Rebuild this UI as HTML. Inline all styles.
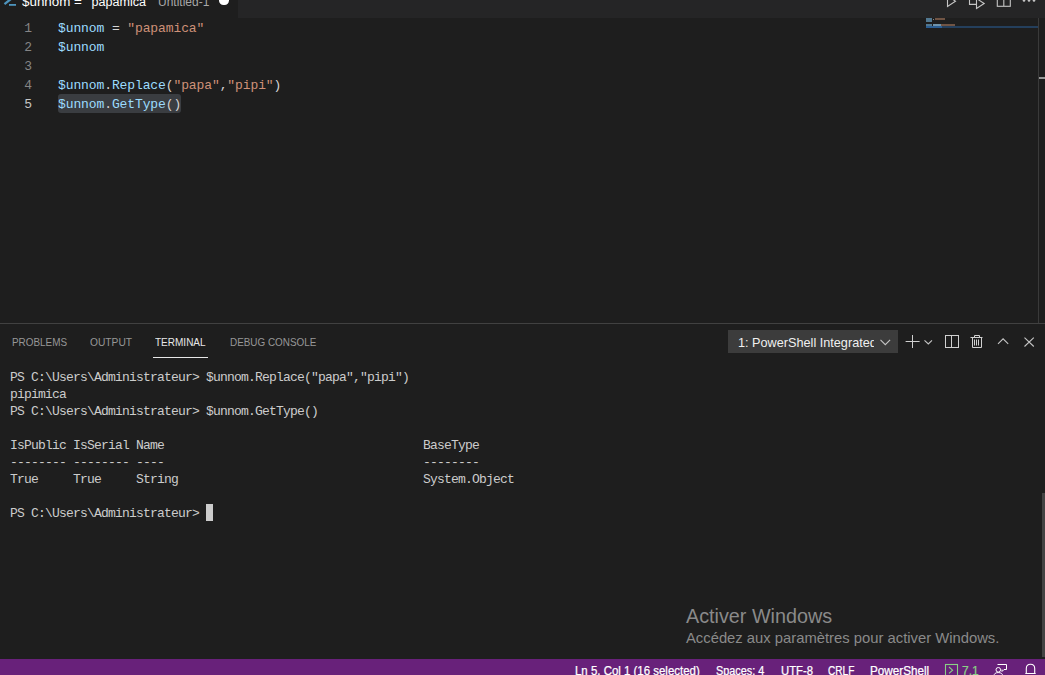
<!DOCTYPE html>
<html><head><meta charset="utf-8">
<style>
*{margin:0;padding:0;box-sizing:border-box}
html,body{width:1045px;height:675px;overflow:hidden;background:#1e1e1e;position:relative}
.abs{position:absolute}
.sans{font-family:"Liberation Sans",sans-serif}
.mono{font-family:"Liberation Mono",monospace;white-space:pre}
#tabbar{left:0;top:0;width:1045px;height:18px;background:#252526}
#tab{left:0;top:0;width:238px;height:18px;background:#1e1e1e;overflow:hidden}
.ln{font-family:"Liberation Mono",monospace;font-size:13px;color:#858585;width:32px;text-align:right;left:0;height:19px;line-height:19px}
.code{font-family:"Liberation Mono",monospace;font-size:13px;letter-spacing:-0.105px;color:#d4d4d4;left:58px;height:19px;line-height:19px;white-space:pre}
.v{color:#9cdcfe}.s{color:#ce9178}
.term{font-family:"Liberation Mono",monospace;font-size:13px;letter-spacing:-0.8px;color:#cccccc;left:10px;height:17px;line-height:17px;white-space:pre}
.ptab{font-family:"Liberation Sans",sans-serif;font-size:11px;color:#979797;top:336px;line-height:13px;transform-origin:0 0;white-space:pre}
.sb{font-family:"Liberation Sans",sans-serif;font-size:12px;color:#fff;-webkit-text-stroke:0.25px currentColor;top:663px;line-height:16px;transform-origin:0 0;white-space:pre}
</style></head>
<body>
<!-- tab bar -->
<div id="tabbar" class="abs"></div>
<div id="tab" class="abs">
  <svg class="abs" style="left:0;top:0" width="20" height="18" viewBox="0 0 20 18"><path d="M4.5 4.2 L11.5 -1.5" stroke="#4d94bd" stroke-width="2.3" fill="none"/><rect x="9" y="4" width="7" height="1.8" fill="#4d94bd"/></svg>
  <div class="abs sans" style="left:22px;top:-6.5px;font-size:13px;color:#fff;line-height:16px;white-space:pre;transform:scaleX(1.03);transform-origin:0 0">$unnom =</div>
  <div class="abs sans" style="left:87px;top:-6.5px;font-size:13px;color:#fff;line-height:16px;white-space:pre;transform:scaleX(0.967);transform-origin:0 0">"papamica"</div>
  <div class="abs sans" style="left:158px;top:-6px;font-size:12px;color:#a8a8a8;line-height:16px;white-space:pre">Untitled-1</div>
  <div class="abs" style="left:219px;top:-4.2px;width:9.5px;height:9.5px;border-radius:50%;background:#fff"></div>
</div>
<!-- editor actions -->
<svg class="abs" style="left:940px;top:0" width="105" height="18" viewBox="0 0 105 18">
  <path d="M7.5 -4.5 L15.5 1.3 L7.5 6.5 Z" stroke="#c5c5c5" stroke-width="1.1" fill="none"/>
  <path d="M29.5 -3 V4.4 H36" stroke="#c5c5c5" stroke-width="1.1" fill="none"/>
  <path d="M36.5 -1.5 L44.2 3.5 L36.5 8.5 Z" stroke="#c5c5c5" stroke-width="1.1" fill="none"/>
  <rect x="57.3" y="-6" width="13" height="12.3" stroke="#c5c5c5" stroke-width="1.1" fill="none"/>
  <path d="M63.8 -6 V6" stroke="#c5c5c5" stroke-width="1.1"/>
  <circle cx="84" cy="0.5" r="1.3" fill="#c5c5c5"/><circle cx="89" cy="0.5" r="1.3" fill="#c5c5c5"/><circle cx="94" cy="0.5" r="1.3" fill="#c5c5c5"/>
</svg>

<!-- line numbers -->
<div class="abs ln" style="top:19px">1</div>
<div class="abs ln" style="top:38px">2</div>
<div class="abs ln" style="top:57px">3</div>
<div class="abs ln" style="top:76px">4</div>
<div class="abs ln" style="top:95px;color:#c6c6c6">5</div>
<!-- selection -->
<div class="abs" style="left:58px;top:94px;width:123px;height:19px;background:#3a3d41;border-radius:3px"></div>
<div class="abs code" style="top:19px"><span class="v">$unnom</span> = <span class="s">"papamica"</span></div>
<div class="abs code" style="top:38px"><span class="v">$unnom</span></div>
<div class="abs code" style="top:76px"><span class="v">$unnom</span>.<span class="v">Replace</span>(<span class="s">"papa"</span>,<span class="s">"pipi"</span>)</div>
<div class="abs code" style="top:95px"><span class="v">$unnom</span>.<span class="v">GetType</span>()</div>

<!-- minimap -->
<div class="abs" style="left:926px;top:18px;width:6px;height:4px;background:#527890"></div>
<div class="abs" style="left:933px;top:18.5px;width:1px;height:1px;background:#8a8a8a"></div>
<div class="abs" style="left:935px;top:18px;width:10px;height:2px;background:#705444"></div>
<div class="abs" style="left:926px;top:24px;width:6px;height:2px;background:#527890"></div>
<div class="abs" style="left:933px;top:24px;width:8px;height:2px;background:#6f93ab"></div>
<div class="abs" style="left:941px;top:24px;width:14px;height:2px;background:#705444"></div>
<div class="abs" style="left:926px;top:26px;width:16px;height:2px;background:#2b5e93"></div>
<div class="abs" style="left:942px;top:26px;width:96px;height:2px;background:#243f5c"></div>
<div class="abs" style="left:1038px;top:18px;width:1px;height:305px;background:#3a3a3a"></div>
<div class="abs" style="left:1039px;top:77px;width:6px;height:2px;background:#979797"></div>

<!-- panel -->
<div class="abs" style="left:0;top:323px;width:1045px;height:1px;background:#414141"></div>
<div class="abs ptab" style="left:12px;transform:scaleX(0.9)">PROBLEMS</div>
<div class="abs ptab" style="left:90px;transform:scaleX(0.93)">OUTPUT</div>
<div class="abs ptab" style="left:155px;color:#e7e7e7;transform:scaleX(0.91)">TERMINAL</div>
<div class="abs" style="left:153px;top:357px;width:55px;height:1px;background:#e7e7e7"></div>
<div class="abs ptab" style="left:230px;transform:scaleX(0.9)">DEBUG CONSOLE</div>

<div class="abs" style="left:728px;top:330px;width:170px;height:23px;background:#3c3c3c"></div>
<div class="abs" style="left:738px;top:330px;width:136px;height:23px;overflow:hidden">
  <div class="abs sans" style="left:0;top:4.5px;font-size:13px;line-height:16px;color:#f0f0f0;white-space:pre;transform:scaleX(0.975);transform-origin:0 0">1: PowerShell Integrated</div>
</div>
<svg class="abs" style="left:860px;top:325px" width="185" height="35" viewBox="860 325 185 35">
  <path d="M880.5 339.8 L885.3 344.6 L890.1 339.8" stroke="#c5c5c5" stroke-width="1.1" fill="none"/>
  <path d="M912.5 335 V348 M905.6 341.5 H919.6" stroke="#d0d0d0" stroke-width="1" fill="none"/>
  <path d="M924.5 340.3 L928.3 344 L932 340.3" stroke="#c5c5c5" stroke-width="1.1" fill="none"/>
  <rect x="945.5" y="335.5" width="13" height="12" stroke="#d0d0d0" stroke-width="1" fill="none"/>
  <path d="M951.5 335.5 V347.5" stroke="#d0d0d0" stroke-width="1"/>
  <path d="M970.5 337.5 H982.5 M974.5 337.5 V335.5 H979.5 V337.5 M972.5 337.5 V347.5 H981.5 V337.5 M974.5 339.5 V345.5 M976.5 339.5 V345.5 M978.5 339.5 V345.5" stroke="#d0d0d0" stroke-width="1" fill="none"/>
  <path d="M998 343.8 L1003.1 338.8 L1008.2 343.8" stroke="#c5c5c5" stroke-width="1.1" fill="none"/>
  <path d="M1024.5 337.7 L1033.8 346.5 M1033.8 337.7 L1024.5 346.5" stroke="#c5c5c5" stroke-width="1.1" fill="none"/>
</svg>

<!-- terminal -->
<div class="abs term" style="top:369px">PS C:\Users\Administrateur&gt; $unnom.Replace("papa","pipi")</div>
<div class="abs term" style="top:386px">pipimica</div>
<div class="abs term" style="top:403px">PS C:\Users\Administrateur&gt; $unnom.GetType()</div>
<div class="abs term" style="top:437px">IsPublic IsSerial Name                                     BaseType</div>
<div class="abs term" style="top:454px">-------- -------- ----                                     --------</div>
<div class="abs term" style="top:471px">True     True     String                                   System.Object</div>
<div class="abs term" style="top:505px">PS C:\Users\Administrateur&gt; </div>
<div class="abs" style="left:206px;top:504px;width:7px;height:17px;background:#cccccc"></div>

<!-- watermark -->
<div class="abs sans" style="left:686px;top:603.5px;font-size:19.8px;color:#8a8a8a;line-height:24px;white-space:pre">Activer Windows</div>
<div class="abs sans" style="left:686px;top:629px;font-size:14.8px;color:#8a8a8a;line-height:18px;white-space:pre">Accédez aux paramètres pour activer Windows.</div>

<!-- status bar -->
<div class="abs" style="left:0;top:659px;width:1045px;height:16px;background:#68217a"></div>
<div class="abs sb" style="left:575px;transform:scaleX(0.954)">Ln 5, Col 1 (16 selected)</div>
<div class="abs sb" style="left:716px;transform:scaleX(0.906)">Spaces: 4</div>
<div class="abs sb" style="left:781px;transform:scaleX(0.94)">UTF-8</div>
<div class="abs sb" style="left:828px;transform:scaleX(0.84)">CRLF</div>
<div class="abs sb" style="left:870px;transform:scaleX(0.975)">PowerShell</div>
<div class="abs sb" style="left:962px;color:#89d185">7.1</div>
<svg class="abs" style="left:940px;top:659px" width="105" height="16" viewBox="940 659 105 16">
  <rect x="945.5" y="664.5" width="12" height="12" stroke="#89d185" stroke-width="1.1" fill="none"/>
  <path d="M949 667 L952.6 670.2 L949 673.4" stroke="#89d185" stroke-width="1.1" fill="none"/>
  <path d="M997.5 664.5 H1006.5 V669.5 H1004 L1002 671.5 V669.5" stroke="#fff" stroke-width="1" fill="none"/>
  <circle cx="998.3" cy="669.8" r="2.3" stroke="#fff" stroke-width="1" fill="none"/>
  <path d="M994 676 Q994 672.6 998.3 672.6 Q1002.6 672.6 1002.6 676" stroke="#fff" stroke-width="1" fill="none"/>
  <path d="M1026.3 673.2 V668.5 Q1026.3 664.2 1030.5 664.2 Q1034.7 664.2 1034.7 668.5 V673.2 M1025.3 673.5 H1035.7" stroke="#fff" stroke-width="1.1" fill="none"/>
</svg>
<div class="abs" style="left:1042px;top:493px;width:3px;height:164px;background:#434343"></div>
</body></html>
